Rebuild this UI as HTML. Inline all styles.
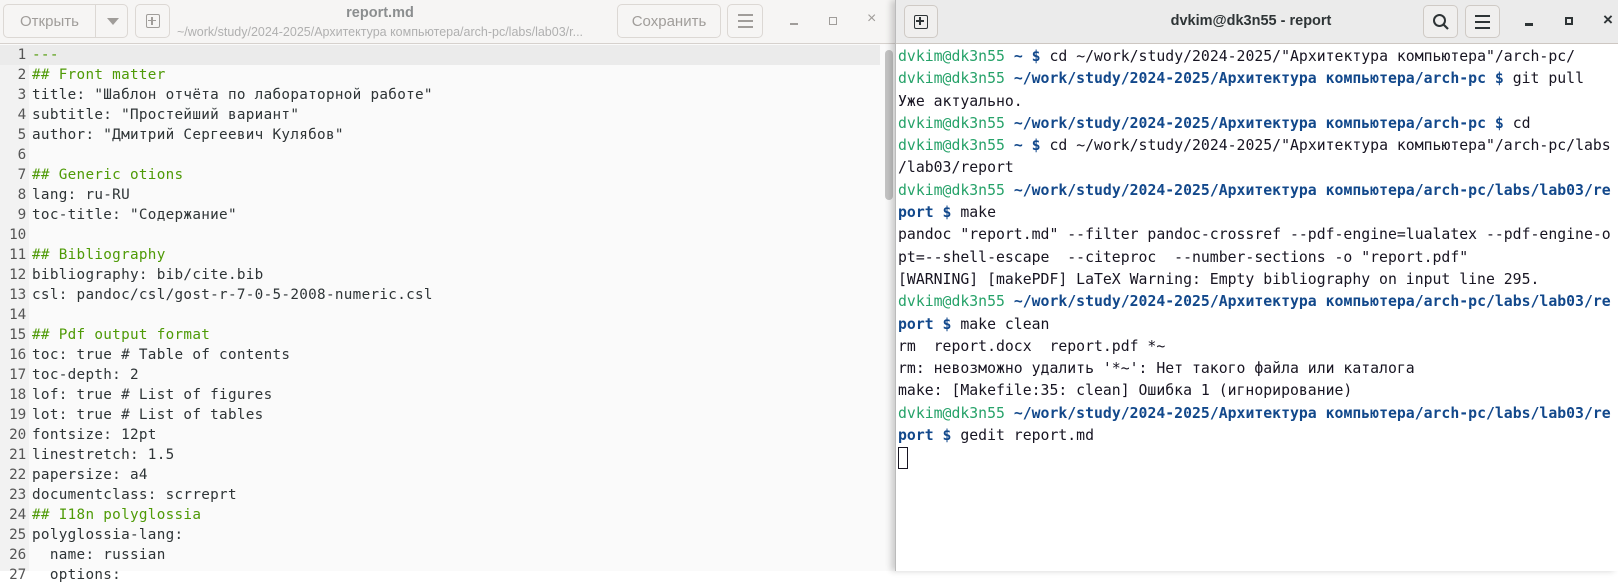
<!DOCTYPE html>
<html><head><meta charset="utf-8"><style>
*{margin:0;padding:0;box-sizing:border-box}
body{width:1618px;height:571px;overflow:hidden;background:#fff;font-family:"Liberation Sans","Noto Sans CJK SC",sans-serif;position:relative}
.ed{position:absolute;left:0;top:0;width:895px;height:571px;background:#fafafa}
.hb{position:absolute;left:0;top:0;height:44px;background:#f6f5f4;border-bottom:1px solid #d6d1cd}
.btn{position:absolute;border:1px solid #dcd8d4;border-radius:5px;background:#f6f5f4;color:#a09d9a;font-size:15px;display:flex;align-items:center;justify-content:center}
.tb .btn{border-color:#cfcac5;background:#f0efee;color:#2e3436}
.gut{position:absolute;left:0;top:45px;width:29px;height:526px;background:#f2f2f2}
.code{position:absolute;left:0;top:45px;font-family:"DejaVu Sans Mono","Liberation Mono",monospace;font-size:14.3px;letter-spacing:0.3px;color:#2e3436}
.code div{height:20px;line-height:20px;white-space:pre}
.code .n{display:inline-block;width:26px;text-align:right;color:#555;margin-right:6px;letter-spacing:-0.2px}
.g{color:#4e9a06}
.tm{position:absolute;left:895px;top:0;width:723px;height:571px;background:#fff;border-left:1px solid #bbb;box-shadow:-4px 0 6px rgba(0,0,0,.18)}
.term{position:absolute;left:898px;top:46px;font-family:"DejaVu Sans Mono",monospace;font-size:14.8px;color:#171421}
.term div{height:22.3px;line-height:22.3px;white-space:pre}
.p{color:#26a269}.b{color:#12488b;font-weight:bold}
.wc{position:absolute;font-size:15px}
</style></head><body>
<div class="ed">
 <div class="hb" style="width:895px"></div>
 <div class="btn" style="left:3px;top:4px;width:125px;height:34px;justify-content:flex-start;padding-left:16px">Открыть<span style="position:absolute;left:91px;top:0;bottom:0;border-left:1px solid #dcd8d4"></span><span style="position:absolute;left:103px;top:13px;width:0;height:0;border-left:6px solid transparent;border-right:6px solid transparent;border-top:7px solid #a09d9a"></span></div>
 <div class="btn" style="left:135px;top:4px;width:35px;height:34px"><span style="width:14px;height:14px;border:1.6px solid #a09d9a;border-radius:2px;position:relative;display:block"><span style="position:absolute;left:4.5px;top:1.5px;width:1.6px;height:8px;background:#a09d9a"></span><span style="position:absolute;left:1.5px;top:4.5px;width:8px;height:1.6px;background:#a09d9a"></span></span></div>
 <div style="position:absolute;left:190px;width:380px;top:5px;text-align:center;font-weight:bold;font-size:14.5px;color:#8b8e8f">report.md</div>
 <div style="position:absolute;left:165px;width:430px;top:25px;text-align:center;font-size:12.5px;color:#b0b0b0;white-space:nowrap;letter-spacing:0">~/work/study/2024-2025/Архитектура компьютера/arch-pc/labs/lab03/r...</div>
 <div class="btn" style="left:617px;top:4px;width:104px;height:34px">Сохранить</div>
 <div class="btn" style="left:727px;top:4px;width:36px;height:34px;flex-direction:column;gap:4px"><i style="width:15px;height:2px;background:#a09d9a;display:block"></i><i style="width:15px;height:2px;background:#a09d9a;display:block"></i><i style="width:15px;height:2px;background:#a09d9a;display:block"></i></div>
 <div style="position:absolute;left:790px;top:23px;width:8px;height:2px;background:#a09d9a"></div>
 <div style="position:absolute;left:829px;top:17px;width:8px;height:8px;border:1.5px solid #a09d9a"></div>
 <div class="wc" style="left:867px;top:10px;color:#a09d9a;font-size:16px">×</div>
 <div class="gut"></div>
 <div style="position:absolute;left:0;top:45px;width:880px;height:20px;background:#ebebeb"></div>
 <div style="position:absolute;left:885px;top:50px;width:8px;height:150px;background:#c4c4c4;border-radius:4px"></div>
 <div class="code">
<div><span class="n">1</span><span class="g">---</span></div>
<div><span class="n">2</span><span class="g">## Front matter</span></div>
<div><span class="n">3</span>title: "Шаблон отчёта по лабораторной работе"</div>
<div><span class="n">4</span>subtitle: "Простейший вариант"</div>
<div><span class="n">5</span>author: "Дмитрий Сергеевич Кулябов"</div>
<div><span class="n">6</span></div>
<div><span class="n">7</span><span class="g">## Generic otions</span></div>
<div><span class="n">8</span>lang: ru-RU</div>
<div><span class="n">9</span>toc-title: "Содержание"</div>
<div><span class="n">10</span></div>
<div><span class="n">11</span><span class="g">## Bibliography</span></div>
<div><span class="n">12</span>bibliography: bib/cite.bib</div>
<div><span class="n">13</span>csl: pandoc/csl/gost-r-7-0-5-2008-numeric.csl</div>
<div><span class="n">14</span></div>
<div><span class="n">15</span><span class="g">## Pdf output format</span></div>
<div><span class="n">16</span>toc: true # Table of contents</div>
<div><span class="n">17</span>toc-depth: 2</div>
<div><span class="n">18</span>lof: true # List of figures</div>
<div><span class="n">19</span>lot: true # List of tables</div>
<div><span class="n">20</span>fontsize: 12pt</div>
<div><span class="n">21</span>linestretch: 1.5</div>
<div><span class="n">22</span>papersize: a4</div>
<div><span class="n">23</span>documentclass: scrreprt</div>
<div><span class="n">24</span><span class="g">## I18n polyglossia</span></div>
<div><span class="n">25</span>polyglossia-lang:</div>
<div><span class="n">26</span>  name: russian</div>
<div><span class="n">27</span>  options:</div>
 </div>
</div>
<div class="tm tb">
 <div class="hb" style="width:723px;background:#ebebeb;border-bottom-color:#cdc7c2"></div>
 <div class="btn" style="left:8px;top:5px;width:34px;height:33px"><span style="width:14px;height:14px;border:1.8px solid #2e3436;border-radius:2px;position:relative;display:block"><span style="position:absolute;left:4.3px;top:1.5px;width:1.8px;height:8px;background:#2e3436"></span><span style="position:absolute;left:1.3px;top:4.5px;width:8px;height:1.8px;background:#2e3436"></span></span></div>
 <div style="position:absolute;left:150px;width:410px;top:13px;text-align:center;font-weight:bold;font-size:14.5px;color:#2e3436">dvkim@dk3n55 - report</div>
 <div class="btn" style="left:527px;top:5px;width:35px;height:33px"><svg width="18" height="18" viewBox="0 0 18 18"><circle cx="7.5" cy="7.5" r="5.5" fill="none" stroke="#2e3436" stroke-width="2"/><path d="M11.5 11.5L16 16" stroke="#2e3436" stroke-width="2.2"/></svg></div>
 <div class="btn" style="left:569px;top:5px;width:35px;height:33px;flex-direction:column;gap:4px"><i style="width:15px;height:2px;background:#2e3436;display:block"></i><i style="width:15px;height:2px;background:#2e3436;display:block"></i><i style="width:15px;height:2px;background:#2e3436;display:block"></i></div>
 <div style="position:absolute;left:629px;top:23px;width:8px;height:2.5px;background:#2e3436"></div>
 <div style="position:absolute;left:669px;top:17px;width:8px;height:8px;border:2px solid #2e3436"></div>
 <div class="wc" style="left:707px;top:10px;color:#2e3436;font-size:17px;font-weight:bold">×</div>
</div>
<div class="term">
<div><span class="p">dvkim@dk3n55</span> <span class="b">~ $</span> cd ~/work/study/2024-2025/"Архитектура компьютера"/arch-pc/</div>
<div><span class="p">dvkim@dk3n55</span> <span class="b">~/work/study/2024-2025/Архитектура компьютера/arch-pc $</span> git pull</div>
<div>Уже актуально.</div>
<div><span class="p">dvkim@dk3n55</span> <span class="b">~/work/study/2024-2025/Архитектура компьютера/arch-pc $</span> cd</div>
<div><span class="p">dvkim@dk3n55</span> <span class="b">~ $</span> cd ~/work/study/2024-2025/"Архитектура компьютера"/arch-pc/labs</div>
<div>/lab03/report</div>
<div><span class="p">dvkim@dk3n55</span> <span class="b">~/work/study/2024-2025/Архитектура компьютера/arch-pc/labs/lab03/re</span></div>
<div><span class="b">port $</span> make</div>
<div>pandoc "report.md" --filter pandoc-crossref --pdf-engine=lualatex --pdf-engine-o</div>
<div>pt=--shell-escape  --citeproc  --number-sections -o "report.pdf"</div>
<div>[WARNING] [makePDF] LaTeX Warning: Empty bibliography on input line 295.</div>
<div><span class="p">dvkim@dk3n55</span> <span class="b">~/work/study/2024-2025/Архитектура компьютера/arch-pc/labs/lab03/re</span></div>
<div><span class="b">port $</span> make clean</div>
<div>rm  report.docx  report.pdf *~</div>
<div>rm: невозможно удалить '*~': Нет такого файла или каталога</div>
<div>make: [Makefile:35: clean] Ошибка 1 (игнорирование)</div>
<div><span class="p">dvkim@dk3n55</span> <span class="b">~/work/study/2024-2025/Архитектура компьютера/arch-pc/labs/lab03/re</span></div>
<div><span class="b">port $</span> gedit report.md</div>
<div><span style="display:inline-block;width:10px;height:22px;border:1.3px solid #171421;vertical-align:top"></span></div>
</div>
</body></html>
